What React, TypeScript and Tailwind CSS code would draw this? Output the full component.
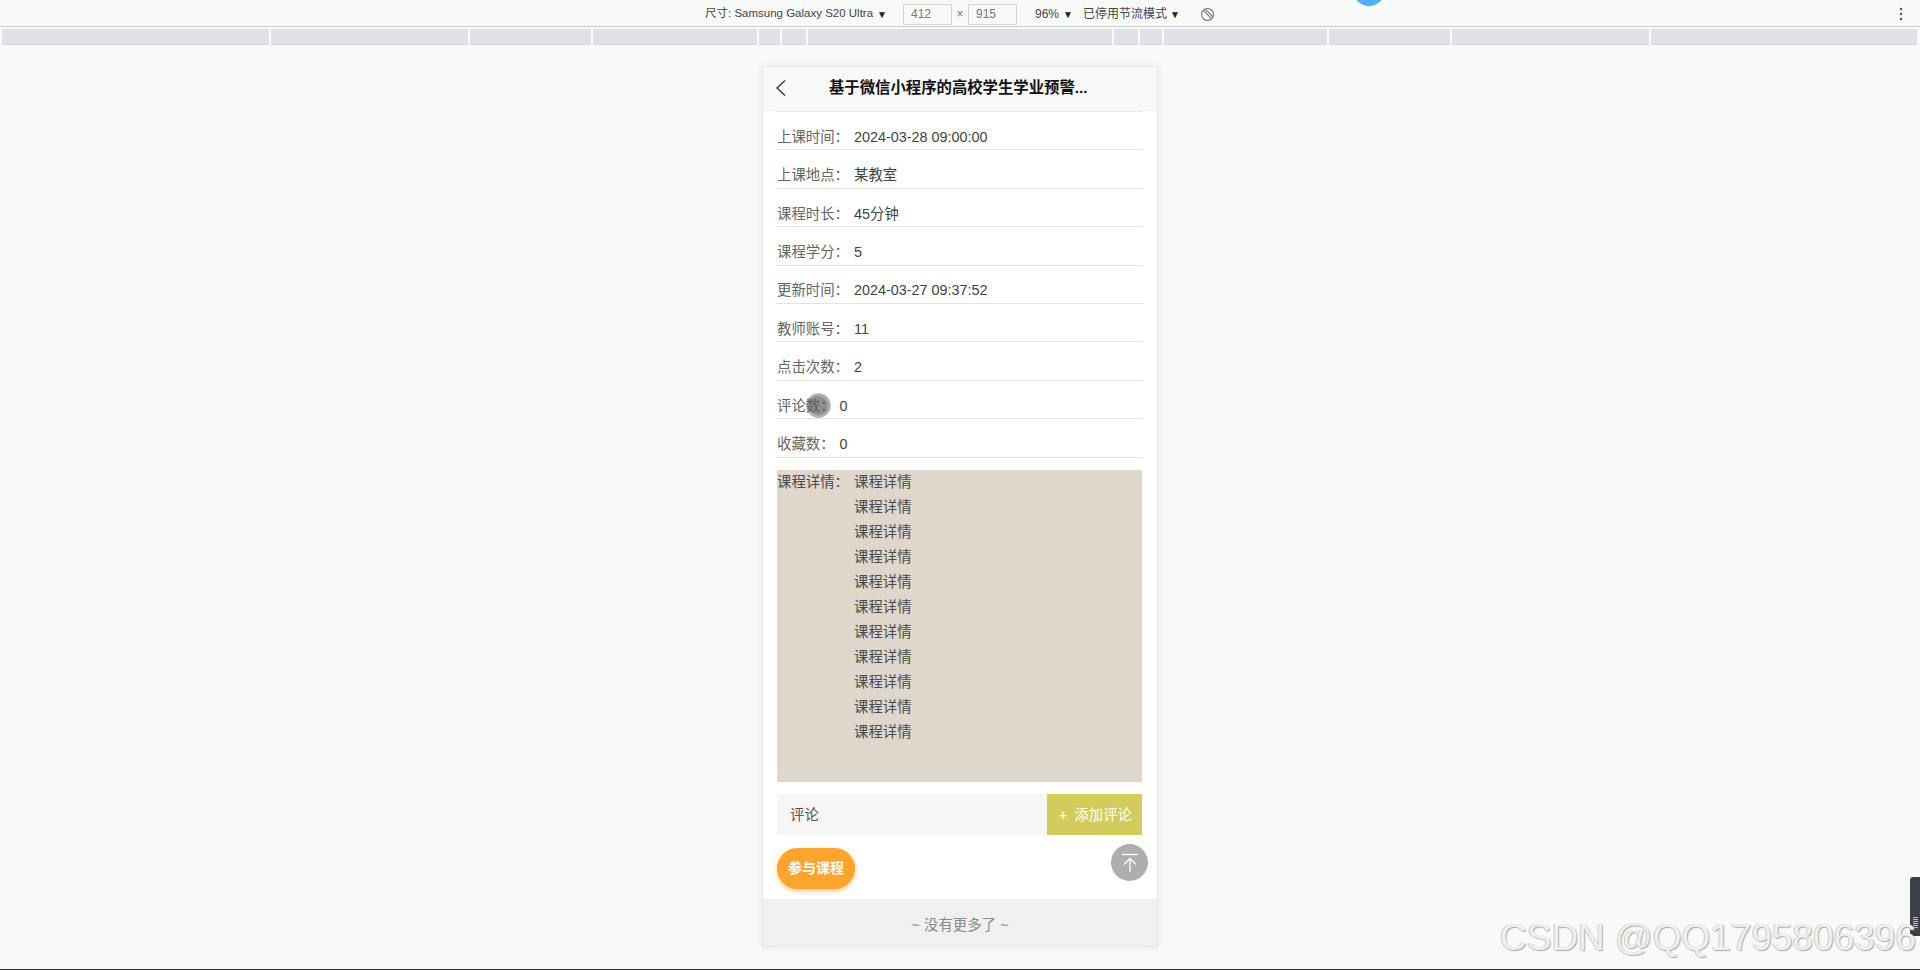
const font = "font-['Liberation_Sans','Noto_Sans_CJK_SC',sans-serif]"

const rulerSegments = [
  "w-[267px]", "w-[197px]", "w-[121px]", "w-[164px]", "w-[21px]", "w-[24px]", "w-[304px]",
  "w-[24px]", "w-[22px]", "w-[163px]", "w-[121px]", "w-[197px]", "w-[266px]",
]

const rows: { label: string; value: string; touch?: boolean }[] = [
  { label: "上课时间", value: "2024-03-28 09:00:00" },
  { label: "上课地点", value: "某教室" },
  { label: "课程时长", value: "45分钟" },
  { label: "课程学分", value: "5" },
  { label: "更新时间", value: "2024-03-27 09:37:52" },
  { label: "教师账号", value: "11" },
  { label: "点击次数", value: "2" },
  { label: "评论数", value: "0", touch: true },
  { label: "收藏数", value: "0" },
]

function Toolbar() {
  return (
    <div className="relative flex h-[27px] shrink-0 items-center border-b border-[#cfd1d1] pl-[705px] pt-[2px] text-[12px] text-[#444]">
      <span className="w-[169px] whitespace-nowrap text-[11.5px]">尺寸: Samsung Galaxy S20 Ultra</span>
      <span className="ml-[3px] w-[26px] text-[10px] text-[#222]">▼</span>
      <div className="flex h-[21px] w-[49px] items-center border border-[#d5d7d7] pl-[7px] text-[#777]">412</div>
      <span className="w-[16px] text-center text-[#777]">×</span>
      <div className="flex h-[21px] w-[49px] items-center border border-[#d5d7d7] pl-[7px] text-[#777]">915</div>
      <span className="ml-[18px] w-[25px]">96%</span>
      <span className="ml-[3px] w-[20px] text-[10px] text-[#222]">▼</span>
      <span className="w-[84px] whitespace-nowrap">已停用节流模式</span>
      <span className="ml-[3px] w-[30px] text-[10px] text-[#222]">▼</span>
      <svg width="15" height="15" viewBox="0 0 16 16" fill="none" stroke="#777" strokeWidth="1.2">
        <circle cx="8" cy="8" r="6.4" />
        <path d="M3.6 3.4 12.4 12.6" />
        <path d="M5.6 2.2 13.8 10.6" />
      </svg>
      <svg className="absolute left-[1899px] top-[7px]" width="4" height="14" viewBox="0 0 4 14" fill="#555">
        <circle cx="2" cy="2" r="1.2" />
        <circle cx="2" cy="7" r="1.2" />
        <circle cx="2" cy="12" r="1.2" />
      </svg>
      <div className="absolute left-[1353px] top-[-26px] h-[32px] w-[32px] rounded-full bg-[#4db0f5] shadow-[0_0_5px_3px_rgba(255,255,255,0.9)]" />
    </div>
  )
}

function Ruler() {
  return (
    <div className="mt-[2px] flex h-[16px] shrink-0 gap-[2px] pl-[2px]">
      {rulerSegments.map((w, i) => (
        <div key={i} className={`${w} border-b border-[#d2d5d9] bg-[#dfe1e5]`} />
      ))}
    </div>
  )
}

function Row({ label, value, touch }: { label: string; value: string; touch?: boolean }) {
  return (
    <div className="relative flex h-[38.4px] items-center border-b border-[#e2e2e2] pl-[1px] pt-[14px]">
      <span className="mr-[5px] text-[#666]">{label}：</span>
      <span className="text-[#444]">{value}</span>
      {touch && (
        <div className="absolute left-[30px] top-[12px] h-[25px] w-[25px] rounded-full bg-[radial-gradient(circle,rgba(90,90,90,0.68)_0%,rgba(90,90,90,0.68)_45%,rgba(90,90,90,0)_100%)]" />
      )}
    </div>
  )
}

function Detail() {
  return (
    <div className="ml-[1px] mr-[1px] mt-[12px] flex h-[312px] bg-[#dfd7cb] leading-[25px]">
      <span className="w-[77px] shrink-0 text-[#4a4a4a]">课程详情：</span>
      <div className="text-[#4a4a4a]">
        {Array.from({ length: 11 }, (_, i) => (
          <p key={i}>课程详情</p>
        ))}
      </div>
    </div>
  )
}

function CommentBar() {
  return (
    <div className="ml-[1px] mr-[1px] mt-[12px] flex h-[41px]">
      <div className="flex flex-1 items-center bg-[#f6f6f6] pl-[13px] pt-[3px] text-[#555]">评论</div>
      <div className="flex w-[95px] items-center justify-center gap-[7px] bg-[#d2cd5a] pl-[2px] pt-[3px] text-white">
        <span>+</span>
        <span>添加评论</span>
      </div>
    </div>
  )
}

export default function App() {
  return (
    <div className={`${font} relative flex h-[970px] w-[1920px] flex-col overflow-hidden border-b border-[#333] bg-[#f8fafa]`}>
      <Toolbar />
      <Ruler />

      <div className="mt-[21px] flex justify-center">
        <div className="relative w-[396px] border border-[#e8e8e8] bg-white text-[14.4px] shadow-[0_0_8px_rgba(0,0,0,0.07)]">
          <div className="relative flex h-[44px] items-center bg-[#f8f8f8] pb-[3px] pl-[66px]">
            <svg className="absolute left-[12px] top-[12px]" width="12" height="18" viewBox="0 0 12 18" fill="none" stroke="#333" strokeWidth="1.4">
              <path d="M10 1.5 2 9l8 7.5" />
            </svg>
            <div className="whitespace-nowrap text-[15.36px] font-bold text-[#111]">基于微信小程序的高校学生学业预警...</div>
          </div>

          <div className="pl-[13px] pr-[14px]">
            <div className="h-[1px] bg-[#e6e6e6]" />
            {rows.map((row) => (
              <Row key={row.label} {...row} />
            ))}
            <Detail />
            <CommentBar />
            <div className="mb-[10px] ml-[1px] mt-[13px] flex h-[41px] w-[78px] items-center justify-center rounded-full bg-[#ffa42c] pt-[1px] font-bold text-white shadow-[0_2px_5px_rgba(255,164,44,0.6)]">
              <span className="whitespace-nowrap text-[14px]">参与课程</span>
            </div>
          </div>

          <div className="flex h-[47px] items-center justify-center bg-[#f0f0f0] pt-[8px] text-[#888]">~ 没有更多了 ~</div>

          <div className="absolute left-[348px] top-[777px] flex h-[37px] w-[37px] items-center justify-center rounded-full bg-[#aeaeae]">
            <svg width="20" height="22" viewBox="0 0 20 22" fill="none" stroke="#fff" strokeWidth="1.3">
              <path d="M2 2.5h16" />
              <path d="M10 20V7" />
              <path d="M4 12.5 10 6.5l6 6" />
            </svg>
          </div>
        </div>
      </div>

      <div className="absolute right-0 top-[877px] flex h-[59px] w-[10px] flex-col justify-end gap-[1px] rounded-l-[3px] bg-[#3b3f46] pb-[8px] pl-[3px] pr-[2px]">
        <div className="h-[1px] bg-[#7fe0a8]" />
        <div className="h-[1px] bg-[#7fe0a8]" />
        <div className="h-[1px] bg-[#7fe0a8]" />
        <div className="h-[1px] bg-[#7fe0a8]" />
        <div className="h-[1px] bg-[#7fe0a8]" />
        <div className="h-[1px] bg-[#7fe0a8]" />
      </div>

      <div className="absolute left-[1500px] top-[917px] whitespace-nowrap text-[37px] leading-[42px] text-[#eef0f0] [text-shadow:1px_1px_1px_#a8a8a8,-1px_0_0_#cccccc]">
        CSDN @QQ1795806396
      </div>
    </div>
  )
}
